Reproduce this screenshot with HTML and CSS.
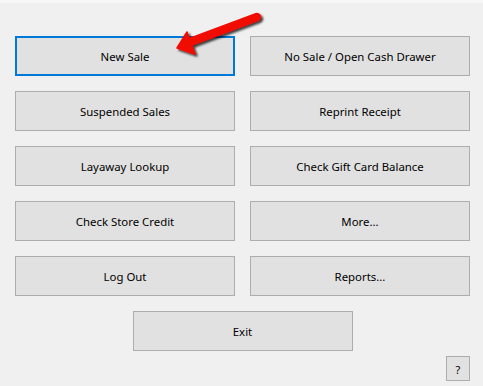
FILE: index.html
```html
<!DOCTYPE html>
<html>
<head>
    <title>Main Menu</title>
    <link rel="stylesheet" href="styles.css">
</head>
<body>
    <div class="menu">
        <div class="grid">
            <button class="btn focused">New Sale</button>
            <button class="btn">No Sale / Open Cash Drawer</button>
            <button class="btn">Suspended Sales</button>
            <button class="btn">Reprint Receipt</button>
            <button class="btn">Layaway Lookup</button>
            <button class="btn">Check Gift Card Balance</button>
            <button class="btn">Check Store Credit</button>
            <button class="btn">More...</button>
            <button class="btn">Log Out</button>
            <button class="btn">Reports...</button>
        </div>
        <div class="exit-row">
            <button class="btn">Exit</button>
        </div>
        <div class="help-row">
            <button class="btn help">?</button>
        </div>
    </div>

    <svg class="arrow" width="483" height="70" viewBox="0 0 483 70">
        <defs>
            <filter id="shadow" x="-20%" y="-20%" width="140%" height="160%">
                <feDropShadow dx="2" dy="2" stdDeviation="1.2" flood-color="#000" flood-opacity="0.75"/>
            </filter>
        </defs>
        <g filter="url(#shadow)" fill="#f00806" stroke="#f00806">
            <line x1="190" y1="42" x2="257" y2="17" stroke-width="8.5" stroke-linecap="round"/>
            <polygon points="177,48 187,32 195,54" stroke-width="1.5" stroke-linejoin="round"/>
        </g>
    </svg>
</body>
</html>
```

FILE: styles.css
```css
body {
    margin: 0;
    background-color: #f0f0f0;
    border-top: 3px solid #f7f7f7;
    font-family: "Noto Sans", "Open Sans", sans-serif;
    font-size: 11.4px;
    color: #000;
}

.menu {
    width: 455px;
    padding: 33px 0 0 15px;
}

.grid {
    display: grid;
    grid-template-columns: 220px 220px;
    grid-auto-rows: 40px;
    gap: 15px;
}

.btn {
    box-sizing: border-box;
    background-color: #e1e1e1;
    border: 1px solid #adadad;
    font-family: inherit;
    font-size: 11.4px;
    color: #000;
    padding: 1px 0 0 0;
    margin: 0;
}

.btn.focused {
    border: 2px solid #0078d7;
}

.exit-row {
    display: flex;
    justify-content: center;
    margin-top: 15px;
}

.exit-row .btn {
    width: 220px;
    height: 40px;
}

.help-row {
    display: flex;
    justify-content: flex-end;
    margin-top: 5px;
}

.help {
    width: 24px;
    height: 25px;
    font-size: 11px;
}

.arrow {
    position: absolute;
    left: 0;
    top: 0;
}
```
